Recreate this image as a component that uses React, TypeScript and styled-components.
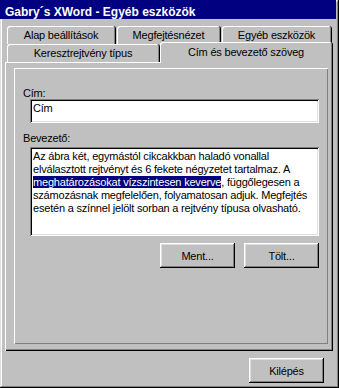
import React from "react";
import styled, { createGlobalStyle } from "styled-components";

const GlobalStyle = createGlobalStyle`
  html, body {
    margin: 0;
    padding: 0;
    background: #c0c0c0;
  }
  body {
    font-family: "Liberation Sans", Arial, sans-serif;
    font-size: 11px;
    letter-spacing: -0.2px;
    color: #000;
  }
`;

const Window = styled.div`
  box-sizing: border-box;
  width: 339px;
  height: 388px;
  display: flex;
  flex-direction: column;
  background: #c0c0c0;
  box-shadow: inset -1px -1px #000, inset 1px 1px #dfdfdf,
    inset -2px -2px #808080, inset 2px 2px #fff;
`;

const TitleBar = styled.div`
  box-sizing: border-box;
  height: 19px;
  margin-right: 3px;
  padding: 5px 0 0 5px;
  background: #000080;
  color: #fff;
  font-size: 12px;
  font-weight: bold;
  line-height: 14px;
  letter-spacing: 0;
  white-space: nowrap;
`;

const Body = styled.div`
  flex: 1;
  display: flex;
  flex-direction: column;
  padding: 7px 6px 0 5px;
`;

const TabRow = styled.div<{ $gap: number }>`
  display: flex;
  align-items: flex-start;
  gap: ${props => props.$gap}px;
  height: 18px;
  padding-left: 2px;
`;

const Tab = styled.div<{ $w: number; $active?: boolean }>`
  box-sizing: border-box;
  position: relative;
  z-index: ${props => (props.$active ? 2 : 1)};
  width: ${props => props.$w}px;
  height: ${props => (props.$active ? 21 : 18)}px;
  margin: ${props => (props.$active ? "-2px 0 -1px" : "0")};
  padding-bottom: ${props => (props.$active ? 1 : 0)}px;
  display: flex;
  align-items: center;
  justify-content: center;
  background: #c0c0c0;
  border-right: 1px solid #000;
  border-radius: 3px 3px 0 0;
  box-shadow: inset 1px 1px #fff, inset -1px 0 #808080;
  white-space: nowrap;
`;

const Panel = styled.div`
  box-sizing: border-box;
  height: 289px;
  padding: 6px 5px 7px 9px;
  display: flex;
  box-shadow: inset 1px 1px #fff, inset -1px -1px #000,
    inset -2px -2px #808080;
`;

const Page = styled.div`
  flex: 1;
  display: flex;
  flex-direction: column;
  padding: 19px 9px 0 9px;
  box-shadow: inset 1px 1px #fff, inset -1px -1px #808080;
`;

const Label = styled.div<{ $top: number }>`
  margin-top: ${props => props.$top}px;
  height: 12px;
  line-height: 12px;
  white-space: nowrap;
`;

const sunken = `
  background: #fff;
  box-shadow: inset 1px 1px #808080, inset -1px -1px #fff,
    inset 2px 2px #000, inset -2px -2px #dfdfdf;
`;

const TextField = styled.input`
  box-sizing: border-box;
  width: calc(100% - 7px);
  height: 24px;
  margin: 0 0 0 7px;
  padding: 2px 3px 9px 3px;
  border: 0;
  outline: none;
  font: inherit;
  letter-spacing: inherit;
  line-height: 13px;
  color: #000;
  ${sunken}
`;

const Memo = styled.div`
  box-sizing: border-box;
  height: 89px;
  margin: 3px 0 0 7px;
  padding: 3px 2px 0 3px;
  line-height: 13px;
  white-space: nowrap;
  overflow: hidden;
  ${sunken}
`;

const Selection = styled.span`
  background: #000080;
  color: #fff;
`;

const ButtonRow = styled.div<{ $top: number; $right: number }>`
  display: flex;
  justify-content: flex-end;
  gap: 9px;
  margin-top: ${props => props.$top}px;
  padding-right: ${props => props.$right}px;
`;

const Button = styled.button`
  box-sizing: border-box;
  width: 75px;
  height: 25px;
  padding: 0;
  border: 0;
  background: #c0c0c0;
  color: #000;
  font: inherit;
  letter-spacing: inherit;
  box-shadow: inset -1px -1px #000, inset 1px 1px #fff,
    inset -2px -2px #808080, inset 2px 2px #dfdfdf;
`;

const App: React.FunctionComponent = () => (
  <>
    <GlobalStyle />
    <Window>
      <TitleBar>Gabry´s XWord - Egyéb eszközök</TitleBar>
      <Body>
        <TabRow $gap={1}>
          <Tab $w={109}>Alap beállítások</Tab>
          <Tab $w={104}>Megfejtésnézet</Tab>
          <Tab $w={110}>Egyéb eszközök</Tab>
        </TabRow>
        <TabRow $gap={0}>
          <Tab $w={153}>Keresztrejtvény típus</Tab>
          <Tab $w={173} $active>
            Cím és bevezető szöveg
          </Tab>
        </TabRow>
        <Panel>
          <Page>
            <Label $top={0}>Cím:</Label>
            <TextField defaultValue="Cím" />
            <Label $top={9}>Bevezető:</Label>
            <Memo>
              <div>Az ábra két, egymástól cikcakkban haladó vonallal</div>
              <div>elválasztott rejtvényt és 6 fekete négyzetet tartalmaz. A</div>
              <div>
                <Selection>meghatározásokat vízszintesen keverve</Selection>,
                függőlegesen a
              </div>
              <div>számozásnak megfelelően, folyamatosan adjuk. Megfejtés</div>
              <div>esetén a színnel jelölt sorban a rejtvény típusa olvasható.</div>
            </Memo>
            <ButtonRow $top={7} $right={0}>
              <Button>Ment...</Button>
              <Button>Tölt...</Button>
            </ButtonRow>
          </Page>
        </Panel>
        <ButtonRow $top={7} $right={9}>
          <Button>Kilépés</Button>
        </ButtonRow>
      </Body>
    </Window>
  </>
);

export default App;
